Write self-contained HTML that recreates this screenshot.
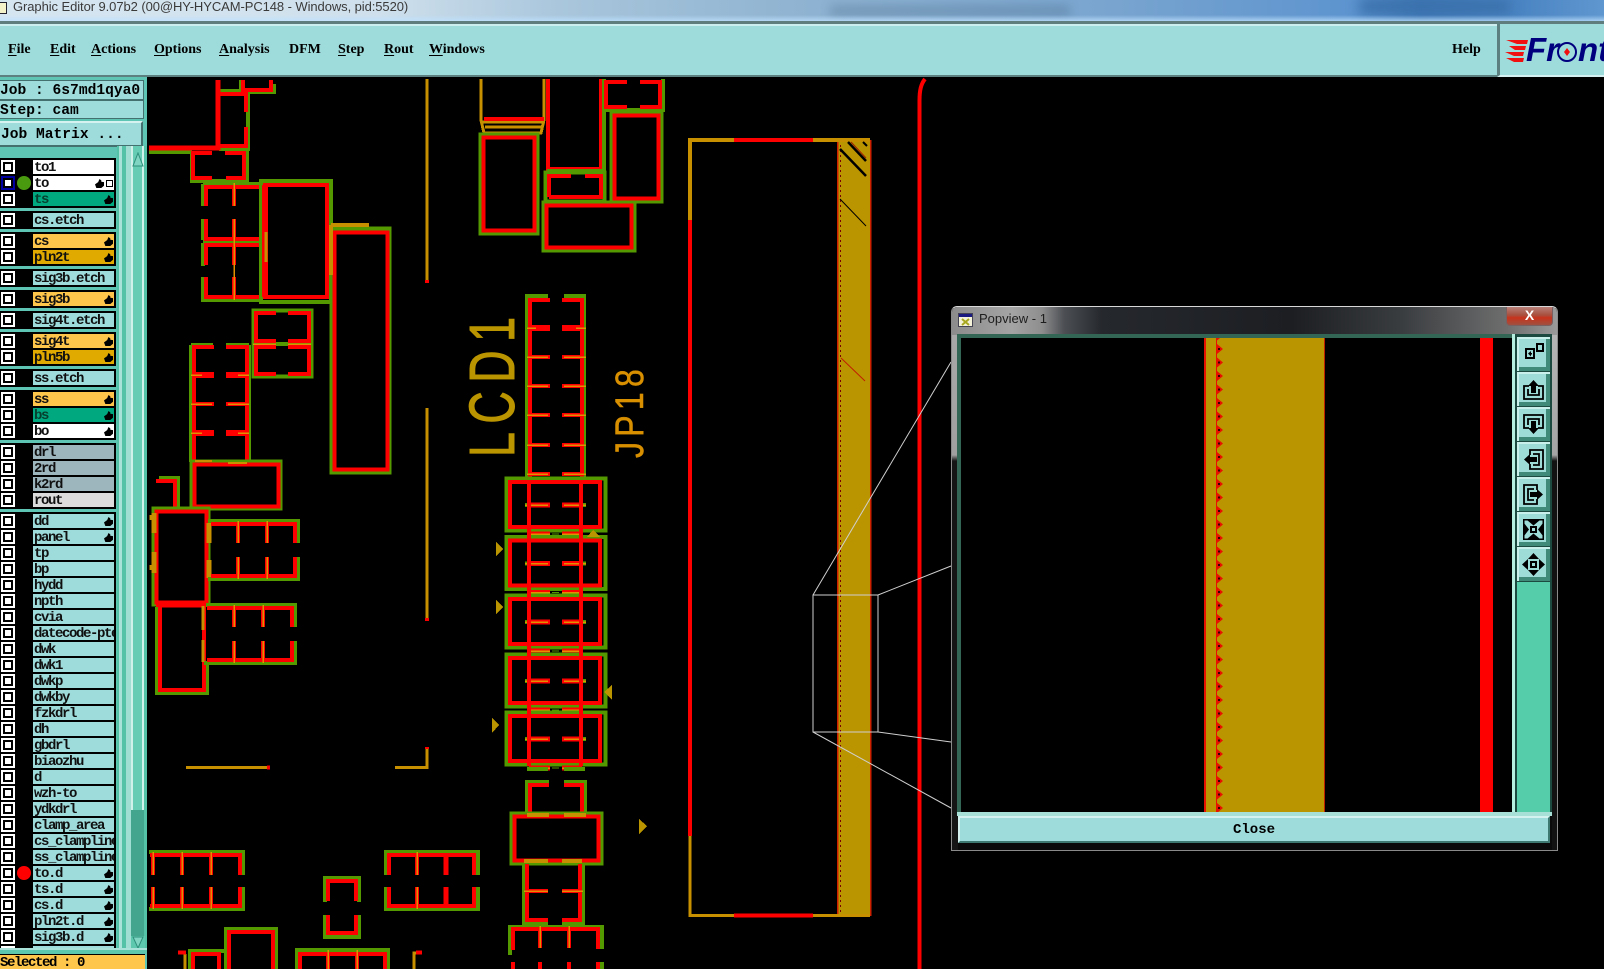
<!DOCTYPE html>
<html lang="en"><head><meta charset="utf-8"><title>Graphic Editor</title>
<style>
html,body{margin:0;padding:0;background:#000;overflow:hidden}
#p{position:relative;width:1604px;height:969px;overflow:hidden;background:#000;font-family:"Liberation Mono",monospace}
.a{position:absolute}
#tb{left:0;top:0;width:1604px;height:21px;background:linear-gradient(90deg,#d6e6f1 0,#cfe0ec 380px,#a9c6dc 560px,#8fb3d1 800px,#7aa5cf 1100px,#5d94cf 1350px,#3f78b6 1420px,#4a84c2 1520px,#5f97d0 1604px)}
#tb2{left:0;top:15px;width:1604px;height:6px;background:linear-gradient(rgba(255,255,255,0),rgba(190,225,255,.75))}
#tt{left:13px;top:-3px;font:13px/20px "Liberation Sans",sans-serif;color:#3a3a3a;letter-spacing:-.08px;white-space:nowrap}
#mb{left:0;top:21px;width:1497px;height:56px;background:#9edcdc;box-sizing:border-box;border-top:3px solid #5f7d7d;border-bottom:2px solid #5c8080;box-shadow:inset 0 2px 0 #cdeeee}
#lb{left:1497px;top:21px;width:107px;height:56px;background:#9edcdc;box-sizing:border-box;border-top:3px solid #5f7d7d;border-left:3px solid #5c8080;border-bottom:2px solid #d5f0f0}
.m{position:absolute;top:42px;font:bold 14px/16px "Liberation Serif",serif;color:#000;white-space:nowrap}
.m u{text-underline-offset:2px}
#sb{left:0;top:77px;width:147px;height:892px;background:#5ec4b4}
.b{position:absolute;left:0;width:144px;box-sizing:border-box;background:#9edcdc;border:1px solid #44716f;border-left:0;font:bold 14.6px/21px "Liberation Mono",monospace;color:#000;white-space:pre;overflow:hidden}
#list{left:0;top:0;width:117px;height:948px;overflow:hidden}
.k{position:absolute;left:0;width:116px;background:#000}
.c{position:absolute;left:1px;width:14px;height:14px;background:#fff}
.c:after{content:"";position:absolute;left:2px;top:2px;width:6px;height:6px;border:2px solid #000;background:#fff}
.c.s{background:#0000a0}
.r{position:absolute;left:33px;width:81px;height:14px;background:#9edcdc;overflow:hidden;font:bold 14px/16px "Liberation Mono",monospace;letter-spacing:-1.4px;color:#101010;white-space:nowrap;padding-left:1px;box-sizing:border-box}
.h{position:absolute;left:71px;top:3px;width:9px;height:9px;background:#000;clip-path:polygon(0 60%,35% 35%,50% 0,70% 15%,70% 30%,100% 35%,100% 75%,70% 100%,15% 100%)}
.w{background:#fff}.t{background:#00a880;color:#06402f}.y{background:#ffc64c}.d{background:#e0aa00}.e{background:#9db5bd}.l{background:#dcdcdc}
#sc{left:117px;top:146px;width:30px;height:802px;background:linear-gradient(90deg,#54c2a6 0 2px,#a8e2d8 2px 5px,#54c2a6 5px 9px,#a0ddd2 9px 14px,#d0f0ea 14px 16px,#66ccb4 16px 25px,#d0f0ea 25px 27px,#54c2a6 27px 30px)}
#sl{left:131px;top:810px;width:13px;height:127px;background:#44a58f}
#sel{left:0;top:954px;width:145px;height:15px;background:#ffc64c;border-top:1px solid #000;box-sizing:border-box;font:bold 14px/16px "Liberation Mono",monospace;letter-spacing:-1.4px;color:#000;white-space:pre;overflow:hidden}
#pv{left:951px;top:306px;width:607px;height:545px;box-sizing:border-box;border:1px solid #8a8a8a;border-top-color:#d8d8d8;border-radius:6px 6px 0 0;overflow:hidden;background:#0a0a0a}
#pt{left:0;top:0;width:605px;height:28px;background:linear-gradient(90deg,#8c8c8c 0,#a4a4a4 60px,#8e8e8e 90px,#4c4f54 112px,#25282d 150px,#1c1e22 340px,#3a3d40 450px,#6e6e6e 555px,#9a9a9a 605px)}
#fl{left:0;top:28px;width:6px;height:515px;background:linear-gradient(#a8a8a8 0,#a0a0a0 120px,#151515 126px)}
#fr{left:600px;top:28px;width:5px;height:515px;background:linear-gradient(#b5b5b5 0,#a5a5a5 120px,#121212 126px)}
#cx{left:554px;top:0;width:47px;height:19px;background:linear-gradient(#b88078 0,#a8503f 45%,#c8331c 60%,#a05040 100%);border:1px solid #7a6060;border-top:0;box-sizing:border-box;border-radius:0 0 4px 4px;color:#fff;font:bold 14px/17px "Liberation Sans",sans-serif;text-align:center}
#pn{left:979px;top:311px;font:13px/16px "Liberation Sans",sans-serif;color:#1d1d1d;white-space:nowrap}
.bt{position:absolute;left:1517px;width:33px;height:34px;background:#9edcd8;box-shadow:inset 2px 2px 0 #c9f0ea,inset -4px -4px 0 #3f8a78;outline:1px solid #1d4a40}
.bt svg{position:absolute;left:0;top:0}
#cl{left:958px;top:816px;width:592px;height:27px;box-sizing:border-box;background:#9edcdc;border:2px solid;border-color:#d3f2f0 #3f7a72 #3f7a72 #d3f2f0;font:bold 14px/24px "Liberation Mono",monospace;text-align:center;color:#000}
</style></head><body><div id="p">

<div class="a" id="tb"></div>
<div class="a" style="left:830px;top:5px;width:240px;height:12px;background:#42627e;filter:blur(5px);opacity:.3"></div>
<div class="a" style="left:1360px;top:0;width:150px;height:13px;background:#3970ab;filter:blur(6px)"></div>
<div class="a" id="tb2"></div>
<div class="a" style="left:0;top:2px;width:7px;height:12px;background:#f4f2c8;border:1px solid #223;border-left:0;box-sizing:border-box"></div>
<div class="a" id="tt">Graphic Editor 9.07b2 (00@HY-HYCAM-PC148 - Windows, pid:5520)</div>

<div class="a" id="mb"></div>
<div class="a" id="lb"></div>
<div class="m" style="left:8px"><u>F</u>ile</div>
<div class="m" style="left:50px"><u>E</u>dit</div>
<div class="m" style="left:91px"><u>A</u>ctions</div>
<div class="m" style="left:154px"><u>O</u>ptions</div>
<div class="m" style="left:219px"><u>A</u>nalysis</div>
<div class="m" style="left:289px">DFM</div>
<div class="m" style="left:338px"><u>S</u>tep</div>
<div class="m" style="left:384px"><u>R</u>out</div>
<div class="m" style="left:429px"><u>W</u>indows</div>
<div class="m" style="left:1452px">Help</div>

<svg class="a" style="left:1497px;top:21px" width="107" height="56" viewBox="1497 21 107 56">
<path d="M1506 40h22l-1 4h-10zM1509 46h17l-1 4h-10zM1505 52h19l-1 4h-9zM1506 58h18l-1 4h-9z" fill="#f01010"/>
<text x="1526" y="61" font-family="Liberation Sans" font-weight="bold" font-style="italic" font-size="33" fill="#00007f">Fr</text>
<text x="1578" y="61" font-family="Liberation Sans" font-weight="bold" font-style="italic" font-size="33" fill="#00007f">nt</text>
<circle cx="1567" cy="52" r="9" fill="none" stroke="#00007f" stroke-width="2"/>
<path d="M1567 48l3 4-3 4-3-4z" fill="#f01010"/>
</svg>

<div class="a" id="sb"></div>
<div class="b" style="top:80px;height:20px">Job : 6s7md1qya0</div>
<div class="b" style="top:100px;height:19px;line-height:20px">Step: cam</div>
<div class="b" style="top:121px;height:26px;border-width:2px;border-color:#d6f2f0 #44716f #44716f #d6f2f0;line-height:24px;padding-left:1px;width:143px">Job Matrix ...</div>

<div class="a" id="sc"></div>
<div class="a" id="sl"></div>
<svg class="a" style="left:131px;top:152px" width="14" height="16"><path d="M7 1L12 14H2z" fill="#7fd5c2" stroke="#2e8f7a"/></svg>
<svg class="a" style="left:131px;top:936px" width="14" height="13"><rect width="14" height="13" fill="#5ec8ae"/><path d="M7 12L12 1H2z" fill="#7fd5c2" stroke="#2e8f7a"/></svg>
<div class="a" style="left:0;top:948px;width:147px;height:2px;background:#a8e2d8"></div>
<div class="a" style="left:0;top:950px;width:147px;height:4px;background:#5ec8ae"></div>

<div class="a" id="list">
<div class="k" style="top:158px;height:50px"></div>
<div class="k" style="top:211px;height:18px"></div>
<div class="k" style="top:232px;height:34px"></div>
<div class="k" style="top:269px;height:18px"></div>
<div class="k" style="top:290px;height:18px"></div>
<div class="k" style="top:311px;height:18px"></div>
<div class="k" style="top:332px;height:34px"></div>
<div class="k" style="top:369px;height:18px"></div>
<div class="k" style="top:390px;height:50px"></div>
<div class="k" style="top:443px;height:66px"></div>
<div class="k" style="top:512px;height:436px"></div>

<div class="c" style="top:160px"></div><div class="r w" style="top:160px">to1</div>
<div class="c s" style="top:176px"></div><div class="r w" style="top:176px">to<div class="h" style="left:62px"></div><div class="a" style="left:73px;top:4px;width:5px;height:5px;border:1px solid #000"></div></div>
<div class="c" style="top:192px"></div><div class="r t" style="top:192px">ts<div class="h"></div></div>
<div class="c" style="top:213px"></div><div class="r" style="top:213px">cs.etch</div>
<div class="c" style="top:234px"></div><div class="r y" style="top:234px">cs<div class="h"></div></div>
<div class="c" style="top:250px"></div><div class="r d" style="top:250px">pln2t<div class="h"></div></div>
<div class="c" style="top:271px"></div><div class="r" style="top:271px">sig3b.etch</div>
<div class="c" style="top:292px"></div><div class="r y" style="top:292px">sig3b<div class="h"></div></div>
<div class="c" style="top:313px"></div><div class="r" style="top:313px">sig4t.etch</div>
<div class="c" style="top:334px"></div><div class="r y" style="top:334px">sig4t<div class="h"></div></div>
<div class="c" style="top:350px"></div><div class="r d" style="top:350px">pln5b<div class="h"></div></div>
<div class="c" style="top:371px"></div><div class="r" style="top:371px">ss.etch</div>
<div class="c" style="top:392px"></div><div class="r y" style="top:392px">ss<div class="h"></div></div>
<div class="c" style="top:408px"></div><div class="r t" style="top:408px">bs<div class="h"></div></div>
<div class="c" style="top:424px"></div><div class="r w" style="top:424px">bo<div class="h"></div></div>
<div class="c" style="top:445px"></div><div class="r e" style="top:445px">drl</div>
<div class="c" style="top:461px"></div><div class="r e" style="top:461px">2rd</div>
<div class="c" style="top:477px"></div><div class="r e" style="top:477px">k2rd</div>
<div class="c" style="top:493px"></div><div class="r l" style="top:493px">rout</div>
<div class="c" style="top:514px"></div><div class="r" style="top:514px">dd<div class="h"></div></div>
<div class="c" style="top:530px"></div><div class="r" style="top:530px">panel<div class="h"></div></div>
<div class="c" style="top:546px"></div><div class="r" style="top:546px">tp</div>
<div class="c" style="top:562px"></div><div class="r" style="top:562px">bp</div>
<div class="c" style="top:578px"></div><div class="r" style="top:578px">hydd</div>
<div class="c" style="top:594px"></div><div class="r" style="top:594px">npth</div>
<div class="c" style="top:610px"></div><div class="r" style="top:610px">cvia</div>
<div class="c" style="top:626px"></div><div class="r" style="top:626px">datecode-pte</div>
<div class="c" style="top:642px"></div><div class="r" style="top:642px">dwk</div>
<div class="c" style="top:658px"></div><div class="r" style="top:658px">dwk1</div>
<div class="c" style="top:674px"></div><div class="r" style="top:674px">dwkp</div>
<div class="c" style="top:690px"></div><div class="r" style="top:690px">dwkby</div>
<div class="c" style="top:706px"></div><div class="r" style="top:706px">fzkdrl</div>
<div class="c" style="top:722px"></div><div class="r" style="top:722px">dh</div>
<div class="c" style="top:738px"></div><div class="r" style="top:738px">gbdrl</div>
<div class="c" style="top:754px"></div><div class="r" style="top:754px">biaozhu</div>
<div class="c" style="top:770px"></div><div class="r" style="top:770px">d</div>
<div class="c" style="top:786px"></div><div class="r" style="top:786px">wzh-to</div>
<div class="c" style="top:802px"></div><div class="r" style="top:802px">ydkdrl</div>
<div class="c" style="top:818px"></div><div class="r" style="top:818px">clamp_area</div>
<div class="c" style="top:834px"></div><div class="r" style="top:834px">cs_clampline</div>
<div class="c" style="top:850px"></div><div class="r" style="top:850px">ss_clampline</div>
<div class="c" style="top:866px"></div><div class="r" style="top:866px">to.d<div class="h"></div></div>
<div class="c" style="top:882px"></div><div class="r" style="top:882px">ts.d<div class="h"></div></div>
<div class="c" style="top:898px"></div><div class="r" style="top:898px">cs.d<div class="h"></div></div>
<div class="c" style="top:914px"></div><div class="r" style="top:914px">pln2t.d<div class="h"></div></div>
<div class="c" style="top:930px"></div><div class="r" style="top:930px">sig3b.d<div class="h"></div></div>
<div class="c" style="top:946px"></div><div class="r" style="top:946px"></div>
<div class="a" style="left:17px;top:176px;width:14px;height:14px;border-radius:50%;background:#4a9a10"></div>
<div class="a" style="left:17px;top:866px;width:14px;height:14px;border-radius:50%;background:#ff0000"></div>
</div>
<div class="a" id="sel">Selected : 0</div>

<svg class="a" style="left:0;top:0" width="1604" height="969" viewBox="0 0 1604 969">
<defs>
<style>
.g{fill:none;stroke:#559900;stroke-width:4}
.rd{fill:none;stroke:#ff0000;stroke-width:4}
.rt{fill:none;stroke:#ff0000;stroke-width:6}
.o{fill:none;stroke:#c79000;stroke-width:3}
.ot{fill:none;stroke:#e09000;stroke-width:1.500}
.tx{fill:#bb9500;stroke:none}
</style>
<g id="u">
<rect x="506.500" y="478.500" width="99" height="52" class="g"/>
<rect x="510" y="482" width="90" height="45" fill="none" stroke="#ff0000" stroke-width="4"/>
<path d="M525 505H529M582 505H586" class="g"/>
<path d="M529 505H550M562 505H582" fill="none" stroke="#ff0000" stroke-width="5"/>
<path d="M525 505H548M564 505H586" class="ot"/>
<path d="M529 534H550M562 534H582" fill="none" stroke="#ff0000" stroke-width="5"/>
<path d="M529 534H550M562 534H582" class="ot"/>
<path d="M552 534H559" stroke="#559900" stroke-width="1" fill="none"/>
</g>
</defs>
<g shape-rendering="crispEdges">
<rect x="147" y="78" width="1457" height="891" fill="#000"/>
<!-- sub left top -->
<path class="g" d="M220 91H241M241 80V92H274V84M248 93V149H219M149 152H192M192 152V181H247V151"/>
<path class="rd" d="M220 94H246V112M246 127V146H220M243 80V90H271V80M212 153H193V178H212M225 153H244V178H226"/>
<path fill="none" stroke="#ff0000" stroke-width="5" d="M218 80V148H149"/>
<!-- 2x2 grid -->
<path class="g" d="M203 184H262M203 184V206M203 219V240M203 241H262M203 243V266M203 277V300H262"/>
<path class="rd" d="M262 187H206V206M206 219V239H262M262 245H206V265M206 277V297H262M234 187V206M234 219V239M234 245V265M234 277V297"/>
<path class="ot" d="M234 183V206M234 219V300"/>
<!-- big boxes -->
<rect x="261" y="181" width="70" height="121" class="g"/>
<rect x="265" y="185" width="62" height="112" class="rd"/>
<path class="rt" d="M265 185V297"/>
<path class="o" d="M266 232V262"/>
<rect x="331.500" y="228.500" width="58" height="244" class="g"/>
<rect x="334.500" y="232.500" width="53" height="237" class="rd"/>
<path class="o" style="stroke-width:4" d="M331 225H369M331 225V275"/>
<path class="o" d="M427 79V280M427 408V618M186 767.500H268M395 767.500H427V748"/>
<path class="rd" d="M427 280V283M427 618V621M267 767.500H270M427 747V749"/>
<!-- F -->
<rect x="253.500" y="310.500" width="58" height="66" class="g"/>
<path class="g" d="M253 344H311"/>
<path class="rd" d="M276 313H256V341H276M288 313H309V341H288M276 347H256V374H276M288 347H309V374H288"/>
<path class="ot" d="M253 344H276M288 344H311"/>
<!-- G -->
<path class="g" d="M191 345H213M226 345H249M191 345V462M249 345V462"/>
<path class="rd" d="M214 347H194V460M226 347H247V460"/>
<path class="rt" d="M194 375H214M226 375H247M194 433H214M226 433H247"/>
<path class="rd" d="M194 404H214M226 404H247"/>
<path class="ot" d="M191 375H202M238 375H249M191 404H212M228 404H249M191 433H202M238 433H249"/>
<!-- H -->
<rect x="191.500" y="461.500" width="89" height="47" class="g"/>
<rect x="194.500" y="464.500" width="84" height="42" class="rd"/>
<path class="o" style="stroke-width:2" d="M195 461H212M228 463H247"/>
<path class="g" d="M159 478H178V510"/>
<path class="rd" d="M156 481H175V507"/>
<!-- J -->
<rect x="153.500" y="508.500" width="55" height="96" class="g"/>
<rect x="156.500" y="511.500" width="50" height="91" class="rd"/>
<path fill="none" stroke="#ff0000" stroke-width="7" d="M156 604H206"/>
<path class="o" style="stroke-width:5" d="M154 513V533M154 552V573M209 523V543M209 560V578"/>
<path class="o" d="M151 515V520M151 565V570"/>
<!-- K -->
<path class="g" d="M208 521H298V543M298 557V579H208"/>
<path class="rd" d="M211 524H295V543M295 557V576H211M238 524V543M238 557V576M267 524V543M267 557V576"/>
<path class="ot" d="M238 521V543M238 557V579M267 521V543M267 557V579"/>
<!-- L -->
<path class="g" d="M157 607V693H207V665"/>
<path class="rd" d="M160 607V690H204V607"/>
<!-- M -->
<path class="g" d="M206 605H295V627M295 641V663H204"/>
<path class="rd" d="M207 608H292V627M292 641V660H207M234 608V627M234 641V660M263 608V627M263 641V660"/>
<path class="ot" d="M234 605V627M234 641V663M263 605V627M263 641V663"/>
<path class="o" d="M203 606V630M203 640V662"/>
<!-- N -->
<path class="g" d="M149 852H243V875M243 887V909H149"/>
<path class="rd" d="M150 855H240V875M240 887V906H150M153 855V875M153 887V906M182 855V875M182 887V906M211 855V875M211 887V906"/>
<path class="ot" d="M153 852V875M153 887V909M182 852V875M182 887V909M211 852V875M211 887V909"/>
<!-- O -->
<path class="g" d="M386 875V852H478V875M386 887V909H478V887"/>
<path class="rd" d="M389 875V855H474V875M389 887V906H474V887M417 855V875M417 887V906M446 855V875M446 887V906"/>
<path fill="none" stroke="#ff0000" stroke-width="5" d="M446 855V875M446 887V906"/>
<path class="ot" d="M417 852V875M417 887V909"/>
<!-- P -->
<path class="g" d="M325 902V878H359V902M325 915V937H359V915"/>
<path class="rd" d="M328 901V881H356V901M328 915V933H356V915"/>
<!-- bottom row -->
<path class="g" d="M226 969V929H276V969M190 969V951H224"/>
<path class="rd" d="M229 969V932H273V969M193 969V954H219V969"/>
<path class="g" d="M297 969V950H388V969"/>
<path class="rd" d="M300 969V954H385V969M328 954V969M357 954V969"/>
<path class="ot" d="M328 950V969M357 950V969"/>
<path class="o" d="M185 954V969M414 969V953H421"/>
<path class="rd" d="M178 952.500H186M416 952.500H422"/>
<!-- top middle -->
<path class="o" d="M481 79V120L484 133H541L544 120V79M482 122H544M485 127H542"/>
<path class="rd" d="M484 119H544"/>
<rect x="480.500" y="134.500" width="57" height="99" class="g"/>
<rect x="483.500" y="137.500" width="51" height="93" class="rd"/>
<path class="rd" d="M548 79V169H601V79"/>
<path class="g" d="M604 79V171H547"/>
<rect x="545.500" y="172.500" width="59" height="29" class="g"/>
<path class="rd" d="M549 197V176H571M585 176H601V197H549"/>
<rect x="543.500" y="202.500" width="91" height="48" class="g"/>
<rect x="546.500" y="205.500" width="85" height="42" class="rd"/>
<path class="g" d="M605 110H663V79"/>
<path class="rd" d="M627 82H606V107H627M640 82H660V107H640"/>
<rect x="611.500" y="112.500" width="50" height="89" class="g"/>
<rect x="614.500" y="115.500" width="44" height="83" class="rd"/>
<!-- LCD strip -->
<path class="g" d="M527 477V296H548M564 296H584V477"/>
<path class="rd" d="M550 300H530V477M562 300H582V477"/>
<path class="rt" d="M530 328H550M562 328H582"/>
<path class="rd" d="M530 357H550M562 357H582M530 386H550M562 386H582M530 415H550M562 415H582M530 445H550M562 445H582M530 474H550M562 474H582"/>
<path class="ot" d="M527 328H536M576 328H586M527 357H548M564 357H586M527 386H548M564 386H586M527 415H548M564 415H586M527 445H548M564 445H586M527 474H548M564 474H586"/>
<use href="#u" y="0"/><use href="#u" y="58.500"/><use href="#u" y="117"/><use href="#u" y="176"/><use href="#u" y="234"/>
<path d="M529 480V766M581 480V766" fill="none" stroke="#ff0000" stroke-width="4"/>
<path class="g" d="M527 769H548M564 769H585"/>
<!-- V W X Y -->
<path class="g" d="M527 813V782H549M564 782H585V813"/>
<path class="rd" d="M549 785H530V813M564 785H582V813"/>
<rect x="511.500" y="813.500" width="90" height="50" class="g"/>
<rect x="514.500" y="816.500" width="84" height="44" class="rd"/>
<path class="o" style="stroke-width:4" d="M527 815H549M564 815H586M524 861H548M562 861H582"/>
<path class="g" d="M524 864V923H548M562 923H583V864"/>
<path class="rd" d="M548 920H527V864M562 920H580V864M527 891H548M562 891H580"/>
<path class="ot" d="M524 891H548M562 891H583"/>
<path class="g" d="M510 955V927H602V949M602 962V969"/>
<path class="rd" d="M513 950V929H598V949M540 929V948M569 929V948M540 962V969M569 962V969M513 962V969M598 962V969"/>
<path class="ot" d="M540 926V948M569 926V948"/>
<path class="tx" d="M496 542L503 549L496 556ZM496 600L503 607L496 614ZM492 718L499 725L492 733ZM639 819L647 826L639 834ZM612 685L604 692L612 700ZM587 537L593 530L600 537Z"/>
<!-- big outline -->
<rect x="837" y="140" width="34" height="776" fill="#bb9500"/>
<path d="M837.500 140V916M870.500 140V916" stroke="#cc2000" stroke-width="1.500" fill="none"/>
<path d="M840.500 140V916" stroke="#700" stroke-width="1" stroke-dasharray="2 3" fill="none"/>
<path d="M690 220V140H870" fill="none" stroke="#c79000" stroke-width="4"/>
<path d="M690 220V836" fill="none" stroke="#ff0000" stroke-width="4"/>
<path d="M690 836V915.500H870" fill="none" stroke="#c79000" stroke-width="3"/>
<path d="M734 140H813M734 915.500H813" fill="none" stroke="#ff0000" stroke-width="4"/>
<path d="M919.500 969V100" stroke="#ff0000" stroke-width="4" fill="none"/>
</g>
<path d="M919.500 101C919.500 90 921 84 925 79" stroke="#ff0000" stroke-width="4" fill="none"/>
<g fill="none">
<path d="M848 142L866 161" stroke="#000" stroke-width="2.500"/>
<path d="M851 142L866 158" stroke="#a02000" stroke-width="1"/>
<path d="M840 149L866 176" stroke="#000" stroke-width="2.500"/>
<path d="M863 142L867 146" stroke="#000" stroke-width="2"/>
<path d="M840 199L866 226" stroke="#000" stroke-width="1"/>
<path d="M841 358L865 381" stroke="#c02000" stroke-width="1"/>
<path d="M813 595H878V732H813ZM813 595L951 362M878 595L951 566M878 732L951 742M813 732L951 808" stroke="#cfcfcf" stroke-width="1"/>
</g>
<text transform="translate(514,457) rotate(-90) scale(.7,1)" font-family="Liberation Sans" font-size="64" fill="#bb9500" stroke="#bb9500" stroke-width="1" textLength="200" lengthAdjust="spacing">LCD1</text>
<text transform="translate(643,458) rotate(-90) scale(.8,1)" font-family="Liberation Sans" font-size="40" fill="#d88f00" stroke="#d88f00" stroke-width=".5" textLength="111" lengthAdjust="spacing">JP18</text>
</svg>

<!-- popup -->
<div class="a" id="pv">
<div class="a" id="pt"></div>
<div class="a" id="fl"></div>
<div class="a" id="fr"></div>
<div class="a" id="cx">X</div>
</div>
<svg class="a" style="left:958px;top:313px" width="16" height="15"><rect x=".5" y=".5" width="14" height="13" fill="#f4f2d8" stroke="#445"/><rect x="1" y="1" width="13" height="3" fill="#1a1a80"/><path d="M4 6l7 6M11 6l-7 6" stroke="#a8a820" stroke-width="2"/></svg>
<div class="a" id="pn">Popview - 1</div>
<div class="a" style="left:957px;top:334px;width:555px;height:478px;background:#000"></div>
<svg class="a" style="left:957px;top:334px" width="555" height="478" viewBox="957 334 555 478">
<defs><pattern id="tri" x="1215" y="342.500" width="16" height="13.500" patternUnits="userSpaceOnUse">
<path d="M2 1.500L8 6.500L2 11.500Z" fill="#e81000"/><rect x="3" y="5.500" width="2" height="2" fill="#300"/>
</pattern></defs>
<g shape-rendering="crispEdges">
<rect x="957" y="334" width="555" height="4" fill="#336655"/>
<rect x="957" y="334" width="4" height="478" fill="#336655"/>
<rect x="1206" y="338" width="118" height="474" fill="#bb9500"/>
<rect x="1204" y="338" width="2" height="474" fill="#e81000"/>
<rect x="1324" y="338" width="1" height="474" fill="#c02000"/>
<rect x="1216" y="338" width="1" height="474" fill="#e81000"/>
<rect x="1215" y="338" width="16" height="474" fill="url(#tri)"/>
<rect x="1480" y="338" width="13" height="474" fill="#ff0000"/>
</g>
</svg>
<div class="a" style="left:1512px;top:334px;width:3px;height:482px;background:#b6eee0"></div>
<div class="a" style="left:1515px;top:334px;width:37px;height:482px;background:#1d4a40"></div>
<div class="a" style="left:1517px;top:582px;width:33px;height:232px;background:#55cdaa"></div>
<div class="a" style="left:957px;top:812px;width:595px;height:4px;background:#a6e0d6"></div>

<div class="bt" style="top:337px"><svg width="33" height="34" viewBox="0 0 33 34"><path d="M19 6H27V15H19ZM21 8V13H25V8Z" fill="#000" fill-rule="evenodd"/><path d="M8 11H18V22H8ZM10 13V20H16V13Z" fill="#000" fill-rule="evenodd"/><path d="M11 16.500L14 14V16H15V17.500H14V19.500Z" fill="#000"/></svg></div>
<div class="bt" style="top:372px"><svg width="33" height="34" viewBox="0 0 33 34"><path d="M16.500 8L22 14H19V21H14V14H11Z" fill="#000"/><path d="M12 14H7V27H26V14H21M11 17V23H22V17" fill="none" stroke="#000" stroke-width="1.800"/></svg></div>
<div class="bt" style="top:407px"><svg width="33" height="34" viewBox="0 0 33 34"><g transform="rotate(180 16.500 17.500)"><path d="M16.500 8L22 14H19V21H14V14H11Z" fill="#000"/><path d="M12 14H7V27H26V14H21M11 17V23H22V17" fill="none" stroke="#000" stroke-width="1.800"/></g></svg></div>
<div class="bt" style="top:442px"><svg width="33" height="34" viewBox="0 0 33 34"><g transform="rotate(-90 16.500 17.500)"><path d="M16.500 8L22 14H19V21H14V14H11Z" fill="#000"/><path d="M12 14H7V27H26V14H21M11 17V23H22V17" fill="none" stroke="#000" stroke-width="1.800"/></g></svg></div>
<div class="bt" style="top:477px"><svg width="33" height="34" viewBox="0 0 33 34"><g transform="rotate(90 16.500 17.500)"><path d="M16.500 8L22 14H19V21H14V14H11Z" fill="#000"/><path d="M12 14H7V27H26V14H21M11 17V23H22V17" fill="none" stroke="#000" stroke-width="1.800"/></g></svg></div>
<div class="bt" style="top:512px"><svg width="33" height="34" viewBox="0 0 33 34"><rect x="6.750" y="7.750" width="19.500" height="19.500" fill="none" stroke="#000" stroke-width="1.500"/><path d="M13 14H20V21H13ZM15 16V19H18V16Z" fill="#000" fill-rule="evenodd"/><path d="M10 8H23L16.500 13.500ZM10 27H23L16.500 21.500ZM7 11V24L12 17.500ZM26 11V24L21 17.500Z" fill="#000"/></svg></div>
<div class="bt" style="top:547px"><svg width="33" height="34" viewBox="0 0 33 34"><path d="M13 14H20V21H13ZM15 16V19H18V16Z" fill="#000" fill-rule="evenodd"/><path d="M16.500 6L22 12H11ZM16.500 29L22 23H11ZM5 17.500L11 12V23ZM28 17.500L22 12V23Z" fill="#000"/></svg></div>
<div class="a" id="cl">Close</div>

</div></body></html>
